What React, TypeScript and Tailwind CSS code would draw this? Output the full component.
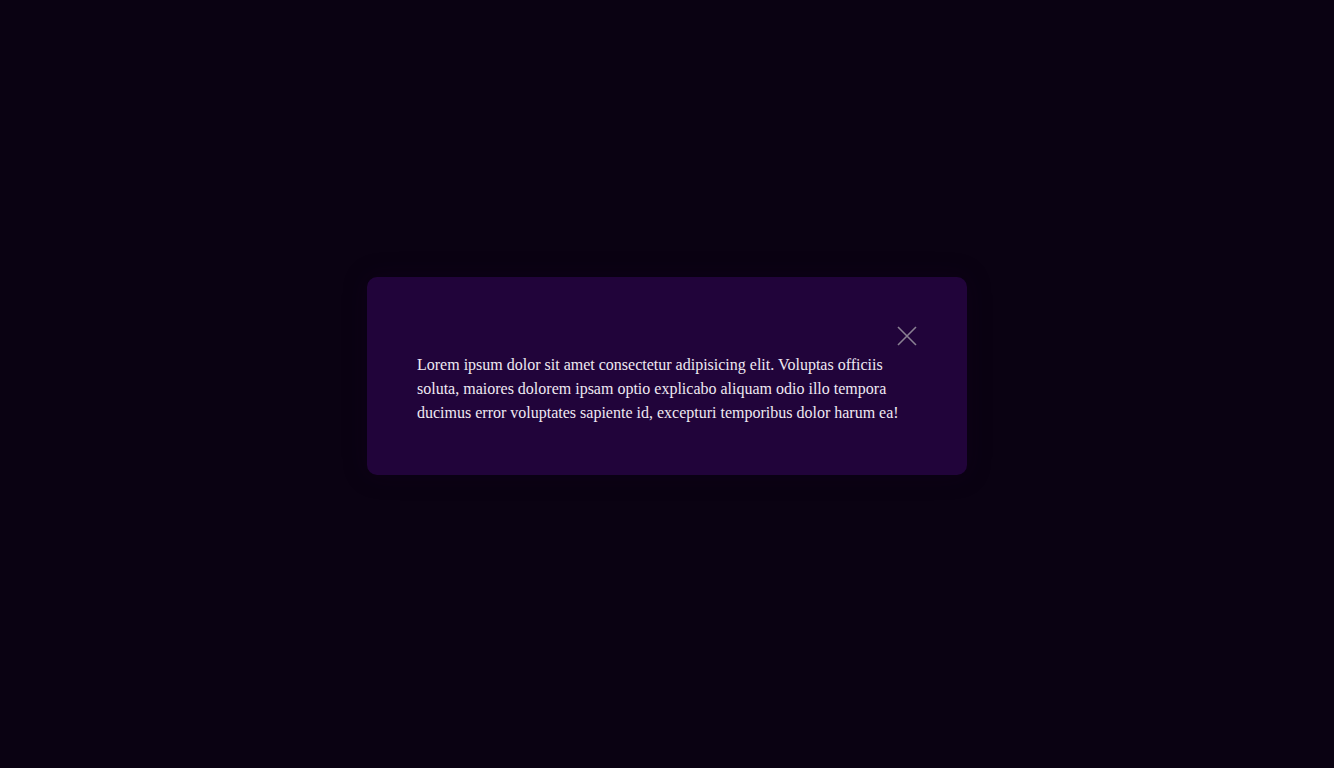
export default function App() {
  return (
    <div className="flex h-[768px] w-full items-start justify-center bg-[#0a0212] pt-[277px] font-['Liberation_Serif',serif]">
      <div className="w-[600px] rounded-[10px] bg-[#21043a] px-[50px] pb-[50px] pt-[49px] shadow-[0_0_24px_rgba(25,5,40,0.25)]">
        <div className="mb-[7px] flex justify-end">
          <button aria-label="Close" className="flex h-[20px] w-[20px] items-center justify-center text-[#8a8192]">
            <svg width="20" height="20" viewBox="0 0 20 20" fill="none" stroke="currentColor" strokeWidth="1.6">
              <path d="M1 1 L19 19 M19 1 L1 19" />
            </svg>
          </button>
        </div>
        <p className="text-[16px] leading-[24px] text-[#efe9f2]">
          Lorem ipsum dolor sit amet consectetur adipisicing elit. Voluptas officiis soluta, maiores dolorem ipsam optio explicabo aliquam odio illo tempora ducimus error voluptates sapiente id, excepturi temporibus dolor harum ea!
        </p>
      </div>
    </div>
  )
}
